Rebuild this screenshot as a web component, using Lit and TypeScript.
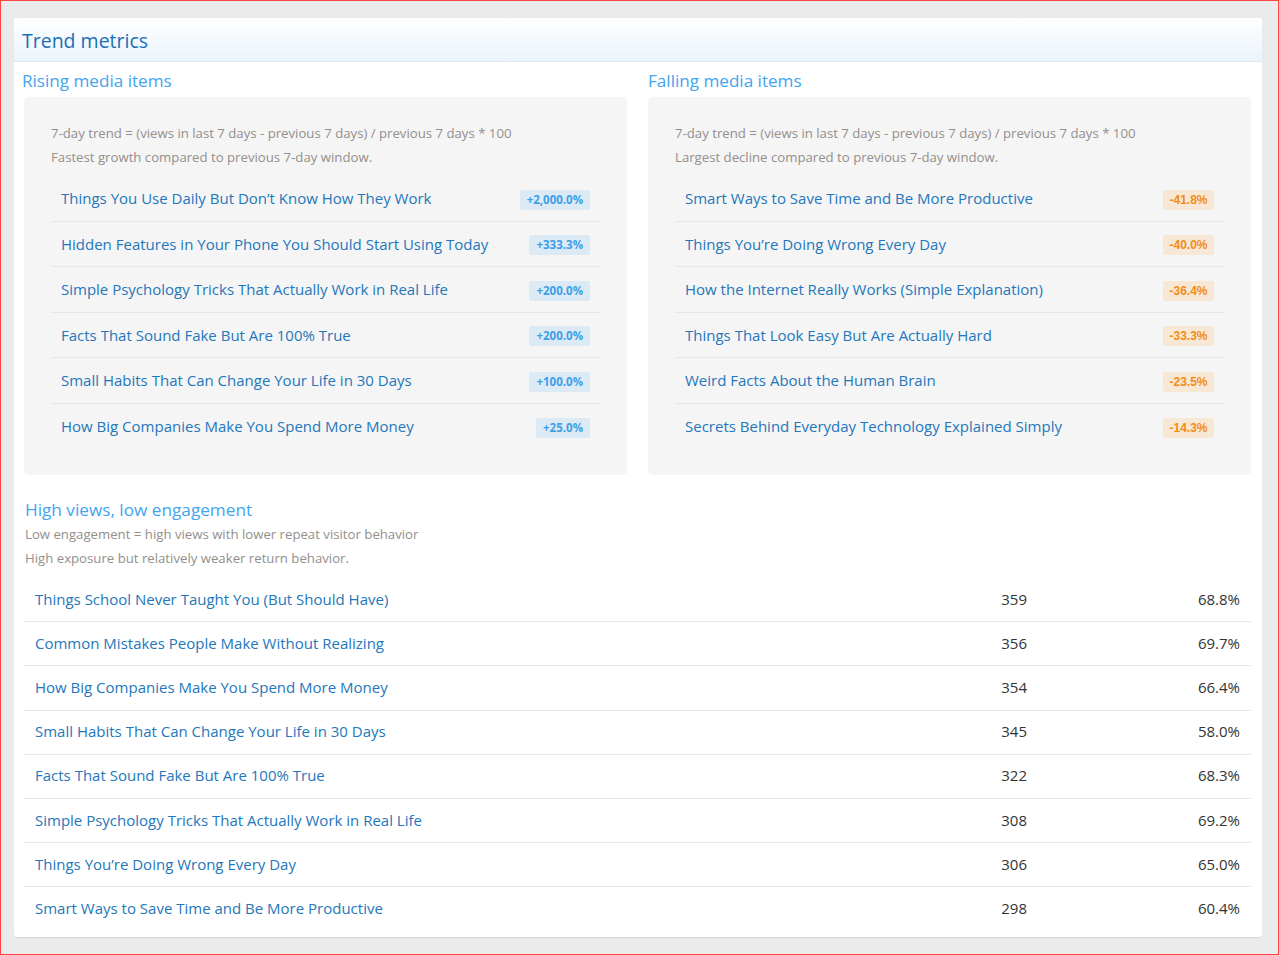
import { LitElement, html, css } from "lit";
import { customElement } from "lit/decorators.js";

const rising = [
  ["Things You Use Daily But Don’t Know How They Work", "+2,000.0%"],
  ["Hidden Features in Your Phone You Should Start Using Today", "+333.3%"],
  ["Simple Psychology Tricks That Actually Work in Real Life", "+200.0%"],
  ["Facts That Sound Fake But Are 100% True", "+200.0%"],
  ["Small Habits That Can Change Your Life in 30 Days", "+100.0%"],
  ["How Big Companies Make You Spend More Money", "+25.0%"],
];

const falling = [
  ["Smart Ways to Save Time and Be More Productive", "-41.8%"],
  ["Things You’re Doing Wrong Every Day", "-40.0%"],
  ["How the Internet Really Works (Simple Explanation)", "-36.4%"],
  ["Things That Look Easy But Are Actually Hard", "-33.3%"],
  ["Weird Facts About the Human Brain", "-23.5%"],
  ["Secrets Behind Everyday Technology Explained Simply", "-14.3%"],
];

const lowEngagement = [
  ["Things School Never Taught You (But Should Have)", "359", "68.8%"],
  ["Common Mistakes People Make Without Realizing", "356", "69.7%"],
  ["How Big Companies Make You Spend More Money", "354", "66.4%"],
  ["Small Habits That Can Change Your Life in 30 Days", "345", "58.0%"],
  ["Facts That Sound Fake But Are 100% True", "322", "68.3%"],
  ["Simple Psychology Tricks That Actually Work in Real Life", "308", "69.2%"],
  ["Things You’re Doing Wrong Every Day", "306", "65.0%"],
  ["Smart Ways to Save Time and Be More Productive", "298", "60.4%"],
];

@customElement("app-root")
export class AppRoot extends LitElement {
  static styles = css`
    :host {
      display: block;
      height: 955px;
      box-sizing: border-box;
      border: 1px solid #f44;
      background: #ebebeb;
      padding: 17px 16px 17px 13px;
      font-family: "Open Sans", "Noto Sans", sans-serif;
      overflow: hidden;
    }

    .card {
      height: 919px;
      box-sizing: border-box;
      background: #fff;
      border-radius: 3px;
      box-shadow: 0 1px 1px #d6d6d6;
      overflow: hidden;
    }

    .card__header {
      height: 44px;
      box-sizing: border-box;
      padding-left: 8px;
      border-bottom: 1px solid #e3e9ef;
      background: linear-gradient(#fff, #eaf4fc);
      color: #1b6fb5;
      font-size: 19.5px;
      line-height: 45px;
    }

    .columns {
      display: grid;
      grid-template-columns: 603px 603px;
      gap: 21px;
      padding: 0 0 0 10px;
    }

    .column__title {
      height: 35px;
      margin-left: -2px;
      color: #42a5f0;
      font-size: 17.1px;
      line-height: 38px;
    }

    .column:last-child .column__title {
      margin-left: 0;
    }

    .panel {
      height: 378px;
      box-sizing: border-box;
      padding: 24px 27px 0;
      border-radius: 5px;
      background: #f5f5f5;
    }

    .note {
      color: #938f8c;
      font-size: 13.2px;
      line-height: 24px;
    }

    .rows {
      margin-top: 7px;
    }

    .row {
      display: flex;
      align-items: center;
      justify-content: space-between;
      height: 45.5px;
      box-sizing: border-box;
      padding: 0 10px;
      border-bottom: 1px solid #e7e7e7;
    }

    .row:last-child {
      border-bottom: none;
    }

    .link {
      color: #2477bb;
      font-size: 15px;
      text-decoration: none;
    }

    .badge {
      height: 20px;
      margin-top: 3px;
      padding: 0 7px;
      border-radius: 2px;
      font-size: 11.5px;
      font-weight: 700;
      line-height: 20px;
    }

    .badge--up {
      background: #dceaf6;
      color: #3d9fe8;
    }

    .badge--down {
      padding: 0 6.5px;
      background: #f7e8d6;
      color: #f28c12;
      font-family: "Liberation Sans", sans-serif;
      font-size: 12px;
    }

    .low {
      padding: 22px 11px 0 10px;
    }

    .low__title {
      margin-left: 1px;
      color: #42a5f0;
      font-size: 17.2px;
      line-height: 25px;
    }

    .low .note {
      margin-left: 1px;
    }

    .table {
      margin-top: 8px;
    }

    .table__row {
      display: grid;
      grid-template-columns: 1fr 90px 213px;
      align-items: center;
      height: 44.2px;
      box-sizing: border-box;
      padding: 0 11px 2px;
      border-bottom: 1px solid #e7e7e7;
      color: #333;
      font-size: 15px;
      text-align: right;
    }

    .table__row:last-child {
      border-bottom: none;
    }

    .table__row .link {
      text-align: left;
    }
  `;

  private _list(items: string[][], badgeClass: string) {
    return html`
      <div class="rows">
        ${items.map(
          ([title, value]) => html`
            <div class="row">
              <a class="link" href="#">${title}</a>
              <span class="badge ${badgeClass}">${value}</span>
            </div>
          `
        )}
      </div>
    `;
  }

  render() {
    return html`
      <div class="card">
        <div class="card__header">Trend metrics</div>
        <div class="columns">
          <section class="column">
            <div class="column__title">Rising media items</div>
            <div class="panel">
              <div class="note">7-day trend = (views in last 7 days - previous 7 days) / previous 7 days * 100</div>
              <div class="note">Fastest growth compared to previous 7-day window.</div>
              ${this._list(rising, "badge--up")}
            </div>
          </section>
          <section class="column">
            <div class="column__title">Falling media items</div>
            <div class="panel">
              <div class="note">7-day trend = (views in last 7 days - previous 7 days) / previous 7 days * 100</div>
              <div class="note">Largest decline compared to previous 7-day window.</div>
              ${this._list(falling, "badge--down")}
            </div>
          </section>
        </div>
        <section class="low">
          <div class="low__title">High views, low engagement</div>
          <div class="note">Low engagement = high views with lower repeat visitor behavior</div>
          <div class="note">High exposure but relatively weaker return behavior.</div>
          <div class="table">
            ${lowEngagement.map(
              ([title, views, pct]) => html`
                <div class="table__row">
                  <a class="link" href="#">${title}</a>
                  <span>${views}</span>
                  <span>${pct}</span>
                </div>
              `
            )}
          </div>
        </section>
      </div>
    `;
  }
}
